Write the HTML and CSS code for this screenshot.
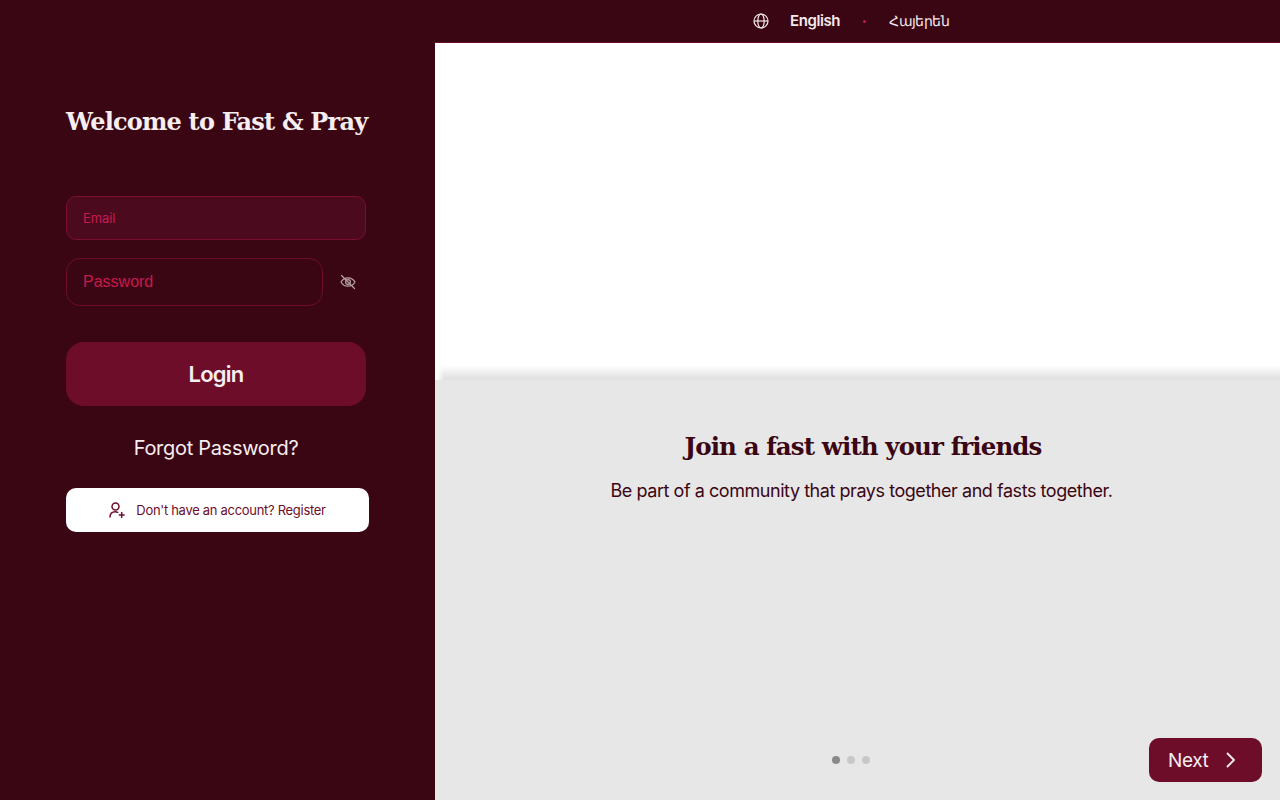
FILE: index.html
```html
<!DOCTYPE html>
<html lang="en">
<head>
    <meta charset="UTF-8">
    <meta name="viewport" content="width=device-width, initial-scale=1.0">
    <title>Fast &amp; Pray - Login</title>
    <link rel="stylesheet" href="styles.css">
</head>
<body>
    <!-- Language bar -->
    <div class="topbar">
        <div class="langs">
            <svg class="globe" width="16" height="16" viewBox="0 0 16 16" fill="none" stroke="currentColor" stroke-width="1.2">
                <circle cx="8" cy="8" r="7"/>
                <ellipse cx="8" cy="8" rx="3.2" ry="7"/>
                <path d="M1 8h14"/>
            </svg>
            <span class="lang active">English</span>
            <span class="dot"></span>
            <span class="lang hy">Հայերեն</span>
        </div>
    </div>

    <div class="main">
        <!-- Login panel -->
        <div class="side">
            <h1>Welcome to Fast &amp; Pray</h1>
            <form class="login-form" onsubmit="return false">
                <input class="email" type="text" placeholder="Email">
                <div class="pw-row">
                    <input class="password" type="password" placeholder="Password">
                    <svg class="eye" width="18" height="18" viewBox="0 0 18 18" fill="none" stroke="currentColor" stroke-width="1.2" stroke-linecap="round">
                        <path d="M2 9c1.6-2.8 4-4.2 7-4.2s5.400 1.400 7 4.200c-1.600 2.800-4 4.200-7 4.200S3.600 11.800 2 9z"/>
                        <circle cx="9" cy="9" r="2.400"/>
                        <path d="M2.500 2.500l13 13"/>
                    </svg>
                </div>
                <button class="login-btn" type="submit">Login</button>
            </form>
            <a class="forgot" href="#">Forgot Password?</a>
            <a class="register" href="#">
                <svg width="16" height="16" viewBox="0 0 16 16" fill="none" stroke="currentColor" stroke-width="1.500" stroke-linecap="round">
                    <circle cx="6.500" cy="4.500" r="3.500"/>
                    <path d="M1 15c0-3.400 2-5.300 5.200-5.300 1 0 1.800.2 2.500.6"/>
                    <path d="M12.700 10.500v4.800M10.300 12.900h4.800"/>
                </svg>
                <span>Don't have an account? Register</span>
            </a>
        </div>

        <!-- Intro carousel -->
        <div class="carousel">
            <div class="picture"></div>
            <div class="slide">
                <h2>Join a fast with your friends</h2>
                <p>Be part of a community that prays together and fasts together.</p>
                <div class="slide-foot">
                    <div class="dots">
                        <span class="on"></span>
                        <span></span>
                        <span></span>
                    </div>
                    <button class="next">
                        Next
                        <svg width="16" height="16" viewBox="0 0 16 16" fill="none" stroke="currentColor" stroke-width="1.800" stroke-linecap="round" stroke-linejoin="round">
                            <path d="M4.500 1.500L11 8l-6.500 6.500"/>
                        </svg>
                    </button>
                </div>
            </div>
        </div>
    </div>
</body>
</html>
```

FILE: styles.css
```css
* {
    box-sizing: border-box;
}
body {
    margin: 0;
    height: 800px;
    overflow: hidden;
    font-family: Inter, "Noto Sans", sans-serif;
    background-color: #3b0613;
    display: flex;
    flex-direction: column;
}
.topbar {
    height: 42px;
    background-color: #3b0613;
    padding-left: 753px;
    display: flex;
    align-items: center;
}
.langs {
    display: flex;
    align-items: center;
    color: #f4eaec;
}
.globe {
    margin-right: 21px;
}
.lang {
    margin-top: -2px;
    font-size: 15px;
    letter-spacing: -0.4px;
}
.lang.active {
    font-weight: 600;
}
.lang.hy {
    font-size: 14px;
    letter-spacing: -0.55px;
}
.dot {
    width: 3px;
    height: 3px;
    border-radius: 50%;
    background-color: #c2174d;
    margin: 0 23px 0 23px;
}
.main {
    flex: 1;
    display: flex;
    min-height: 0;
}
.side {
    width: 435px;
    padding: 62px 0 0 66px;
}
h1 {
    margin: 0 0 56px;
    width: 320px;
    font-family: "DejaVu Serif", serif;
    font-size: 24px;
    line-height: 36px;
    font-weight: 700;
    letter-spacing: -0.8px;
    white-space: nowrap;
    color: #f6eef0;
}
.login-form {
    width: 300px;
}
.login-form input {
    display: block;
    color: #f6eef0;
    outline: none;
    padding: 0 16px;
}
.login-form input::placeholder {
    color: #c71a50;
    opacity: 1;
}
.email {
    width: 300px;
    height: 44px;
    border: 1px solid #7a0f30;
    border-radius: 10px;
    background-color: #4b0a1e;
    font-family: Inter, sans-serif;
    font-size: 13px;
    letter-spacing: -0.1px;
}
.pw-row {
    display: flex;
    align-items: center;
    margin-top: 18px;
}
.password {
    width: 257px;
    height: 48px;
    border: 1px solid #6e0d2a;
    border-radius: 14px;
    background-color: transparent;
    font-family: "Liberation Sans", Arial, sans-serif;
    font-size: 16px;
}
.eye {
    margin-left: 16px;
    color: #b9a5aa;
}
.login-btn {
    display: block;
    width: 300px;
    height: 64px;
    margin-top: 36px;
    border: none;
    border-radius: 18px;
    background-color: #6e0d2a;
    color: #f6eef0;
    font-family: Inter, sans-serif;
    font-size: 22px;
    font-weight: 600;
    letter-spacing: -0.8px;
}
.forgot {
    display: block;
    width: 300px;
    margin-top: 28px;
    text-align: center;
    font-size: 20px;
    line-height: 28px;
    letter-spacing: -0.3px;
    color: #f6eef0;
    text-decoration: none;
}
.register {
    display: flex;
    align-items: center;
    justify-content: center;
    gap: 11px;
    width: 303px;
    height: 44px;
    margin-top: 26px;
    background-color: #fff;
    border-radius: 10px;
    color: #6e0d2a;
    font-size: 13px;
    letter-spacing: -0.3px;
    text-decoration: none;
}
.carousel {
    flex: 1;
    display: flex;
    flex-direction: column;
    overflow: hidden;
}
.picture {
    height: 338px;
    background-color: #fff;
    border-top: 1px solid #6e0d2a;
}
.slide {
    flex: 1;
    position: relative;
    display: flex;
    flex-direction: column;
    background-color: #e7e7e7;
    text-align: center;
    padding: 48px 0 18px;
}
/* soft shade above the grey panel */
.slide::before {
    content: "";
    position: absolute;
    left: 2px;
    right: 0;
    top: -15px;
    height: 15px;
    background: linear-gradient(to bottom, rgba(0, 0, 0, 0), rgba(0, 0, 0, 0.04) 35%, rgba(0, 0, 0, 0.09) 70%, rgba(0, 0, 0, 0.12));
    -webkit-mask-image: linear-gradient(to right, transparent, #000 7px);
    mask-image: linear-gradient(to right, transparent, #000 7px);
}
h2 {
    margin: 0;
    font-family: "DejaVu Serif", serif;
    font-size: 24.5px;
    line-height: 38px;
    font-weight: 700;
    letter-spacing: -0.9px;
    color: #3b0613;
    padding-left: 11px;
}
.slide p {
    margin: 12px 0 0;
    font-size: 18px;
    line-height: 26px;
    letter-spacing: -0.45px;
    color: #3b0613;
    padding-left: 8px;
}
.slide-foot {
    margin-top: auto;
    position: relative;
    display: flex;
    justify-content: flex-end;
    padding-right: 18px;
}
.dots {
    position: absolute;
    left: 397px;
    top: 18px;
    display: flex;
    gap: 7px;
}
.dots span {
    width: 8px;
    height: 8px;
    border-radius: 50%;
    background-color: #c8c8c8;
}
.dots span.on {
    background-color: #8a8a8a;
}
.next {
    display: flex;
    align-items: center;
    gap: 15px;
    width: 113px;
    height: 44px;
    padding: 0 0 0 19px;
    border: none;
    border-radius: 10px;
    background-color: #6e0d2a;
    color: #f6eef0;
    font-family: Inter, sans-serif;
    font-size: 19px;
    letter-spacing: -0.4px;
}
```
